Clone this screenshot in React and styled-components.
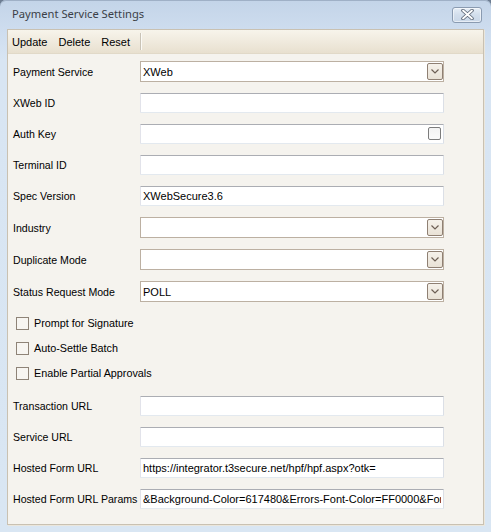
import React from "react";
import styled, { createGlobalStyle } from "styled-components";

const Global = createGlobalStyle`
  html, body { margin: 0; padding: 0; background: #6d7d92; }
  body { width: 491px; height: 532px; overflow: hidden; font-family: "Liberation Sans", Arial, sans-serif; }
  * { box-sizing: border-box; }
`;

const Window = styled.div`
  width: 491px;
  height: 532px;
  display: flex;
  flex-direction: column;
  border-top-left-radius: 6px;
  border-top-right-radius: 6px;
  background: linear-gradient(to bottom, #c3d4e8 0px, #cddcee 28px, #d8e5f3 60px, #d9e6f3 100%);
  box-shadow: inset 0 1px 0 #9fb0c6;
`;

const TitleBar = styled.div`
  height: 29px;
  flex: none;
  display: flex;
  align-items: center;
  justify-content: space-between;
  padding: 0 9px 2px 12px;
`;

const Title = styled.span`
  font-family: "Noto Sans", "Open Sans", sans-serif;
  font-size: 11.2px;
  color: #3b3f47;
`;

const CloseButton = styled.div`
  width: 30px;
  height: 16px;
  margin-top: 2px;
  border: 1px solid #8a9bb1;
  border-radius: 3px;
  background: linear-gradient(to bottom, #e6eef7, #d2deec 50%, #c9d7e8);
  box-shadow: inset 0 0 0 1px rgba(255,255,255,0.55);
  display: flex;
  align-items: center;
  justify-content: center;
`;

const Panel = styled.div`
  flex: 1;
  margin: 0 7px 7px 7px;
  border: 1px solid #c9c1b2;
  background: #f5f3ee;
  display: flex;
  flex-direction: column;
  box-shadow: 1px 1px 0 #eae6dc;
`;

const Toolbar = styled.div`
  height: 24px;
  flex: none;
  display: flex;
  align-items: center;
  padding-left: 4px;
  background: linear-gradient(to bottom, #f7f4eb, #efe9dc 55%, #e8e0cf);
  border-bottom: 1px solid #e1d9c8;
`;

const ToolButton = styled.span`
  font-size: 11px;
  color: #000;
  margin-right: 11px;
`;

const ToolSep = styled.span`
  width: 1px;
  height: 17px;
  margin-left: -1px;
  background: #c9c3b6;
  box-shadow: 1px 0 0 #fbfaf6;
`;

const Body = styled.div`
  padding: 7px 0 0 5px;
  display: flex;
  flex-direction: column;
`;

const Row = styled.div`
  display: flex;
  align-items: center;
  height: ${(p) => (p.$select ? 21 : 20)}px;
  margin-bottom: 11px;
`;

const Label = styled.label`
  width: 127px;
  flex: none;
  font-size: 10.6px;
  color: #000;
  white-space: nowrap;
`;

const TextBox = styled.input`
  width: 304px;
  height: 20px;
  border: 1px solid #dfe2e8;
  border-top-color: #abadb3;
  border-left-color: #e2e3ea;
  border-right-color: #dbdfe6;
  border-bottom-color: #e3e9ef;
  border-radius: 1px;
  background: #fff;
  padding: 0 2px;
  font-family: "Liberation Sans", Arial, sans-serif;
  font-size: 11px;
  color: #000;
  outline: none;
`;

const BoxWrap = styled.div`
  position: relative;
  width: 304px;
  height: ${(p) => (p.$select ? 21 : 20)}px;
`;

const SelectBox = styled.div`
  width: 304px;
  height: 21px;
  border: 1px solid #bcb0a2;
  background: #fff;
  display: flex;
  align-items: center;
  padding-left: 2px;
  font-size: 11px;
  color: #000;
`;

const DropButton = styled.div`
  position: absolute;
  right: 1px;
  top: 2px;
  width: 16px;
  height: 17px;
  border: 1px solid #8f8073;
  border-radius: 2px;
  background: linear-gradient(to bottom, #f5f1ea, #e9e2d6);
  display: flex;
  align-items: center;
  justify-content: center;
`;

const InnerCheck = styled.div`
  position: absolute;
  right: 3px;
  top: 3px;
  width: 13px;
  height: 13px;
  border: 1px solid #7c7c7c;
  border-radius: 2px;
  background: linear-gradient(to bottom, #f3f3f3, #fafafa);
`;

const CheckGroup = styled.div`
  display: flex;
  flex-direction: column;
  padding-top: 4px;
  padding-bottom: 4px;
`;

const CheckRow = styled.div`
  height: 25px;
  display: flex;
  align-items: flex-start;
  padding-left: 3px;
`;

const CheckSquare = styled.span`
  width: 13px;
  height: 13px;
  border: 1px solid #8e8377;
  background: #f7f5f1;
  margin-right: 5px;
  flex: none;
`;

const CheckText = styled.span`
  font-size: 10.8px;
  color: #000;
  line-height: 13px;
`;

const Chevron = () => (
  <svg width="8" height="5" viewBox="0 0 8 5">
    <path d="M0.5 0.5 L4 4 L7.5 0.5" fill="none" stroke="#6d5f54" strokeWidth="1.2" />
  </svg>
);

const CloseX = () => (
  <svg width="13" height="11" viewBox="0 0 13 11">
    <path d="M2 1.5 L11 9.5 M11 1.5 L2 9.5" stroke="#5e6878" strokeWidth="3.6" strokeLinecap="round" />
    <path d="M2 1.5 L11 9.5 M11 1.5 L2 9.5" stroke="#ffffff" strokeWidth="1.8" strokeLinecap="round" />
  </svg>
);

const Text = ({ label, value = "" }) => (
  <Row>
    <Label>{label}</Label>
    <TextBox readOnly defaultValue={value} />
  </Row>
);

const Select = ({ label, value = "" }) => (
  <Row $select>
    <Label>{label}</Label>
    <BoxWrap $select>
      <SelectBox>{value}</SelectBox>
      <DropButton>
        <Chevron />
      </DropButton>
    </BoxWrap>
  </Row>
);

const Check = ({ label }) => (
  <CheckRow>
    <CheckSquare />
    <CheckText>{label}</CheckText>
  </CheckRow>
);

export default function App() {
  return (
    <>
      <Global />
      <Window>
        <TitleBar>
          <Title>Payment Service Settings</Title>
          <CloseButton>
            <CloseX />
          </CloseButton>
        </TitleBar>
        <Panel>
          <Toolbar>
            <ToolButton>Update</ToolButton>
            <ToolButton>Delete</ToolButton>
            <ToolButton>Reset</ToolButton>
            <ToolSep />
          </Toolbar>
          <Body>
            <Select label="Payment Service" value="XWeb" />
            <Text label="XWeb ID" />
            <Row>
              <Label>Auth Key</Label>
              <BoxWrap>
                <TextBox readOnly defaultValue="" />
                <InnerCheck />
              </BoxWrap>
            </Row>
            <Text label="Terminal ID" />
            <Text label="Spec Version" value="XWebSecure3.6" />
            <Select label="Industry" />
            <Select label="Duplicate Mode" />
            <Select label="Status Request Mode" value="POLL" />
            <CheckGroup>
              <Check label="Prompt for Signature" />
              <Check label="Auto-Settle Batch" />
              <Check label="Enable Partial Approvals" />
            </CheckGroup>
            <Text label="Transaction URL" />
            <Text label="Service URL" />
            <Text label="Hosted Form URL" value="https://integrator.t3secure.net/hpf/hpf.aspx?otk=" />
            <Text
              label="Hosted Form URL Params"
              value="&Background-Color=617480&Errors-Font-Color=FF0000&Font-Family=Arial"
            />
          </Body>
        </Panel>
      </Window>
    </>
  );
}
